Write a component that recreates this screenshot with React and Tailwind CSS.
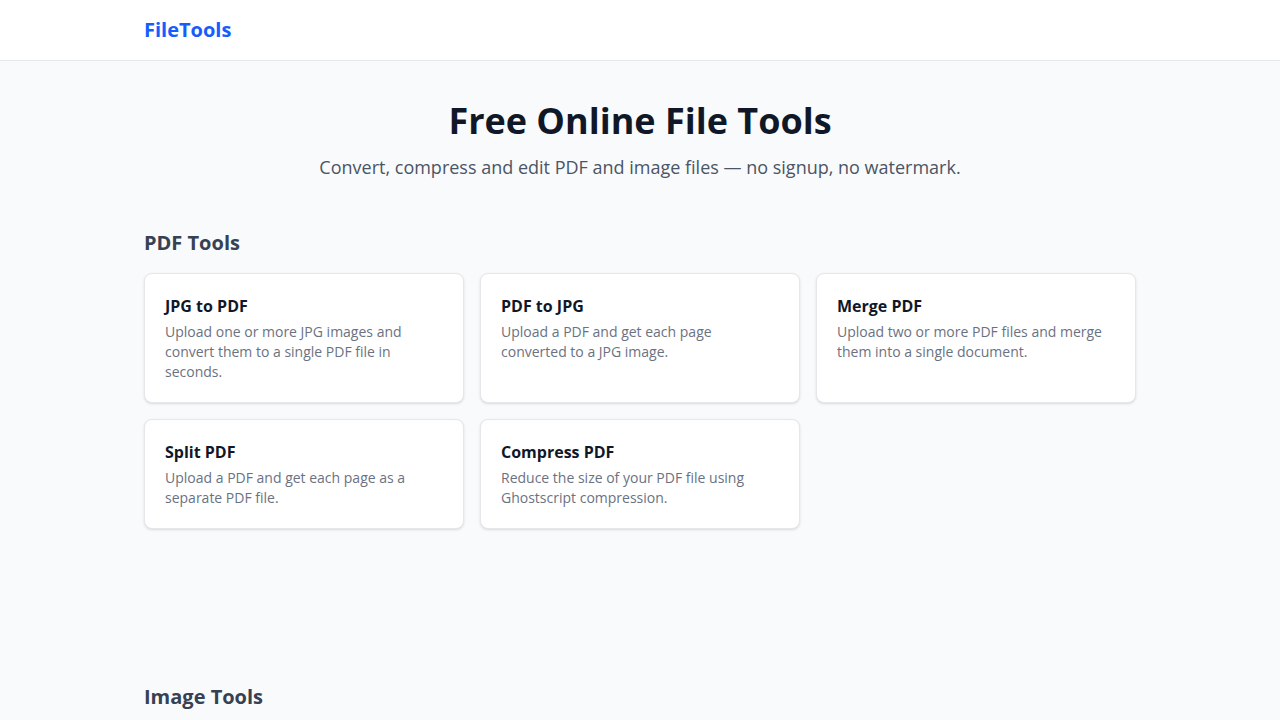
const pdfTools = [
  { title: "JPG to PDF", desc: "Upload one or more JPG images and convert them to a single PDF file in seconds." },
  { title: "PDF to JPG", desc: "Upload a PDF and get each page converted to a JPG image." },
  { title: "Merge PDF", desc: "Upload two or more PDF files and merge them into a single document." },
  { title: "Split PDF", desc: "Upload a PDF and get each page as a separate PDF file." },
  { title: "Compress PDF", desc: "Reduce the size of your PDF file using Ghostscript compression." },
]

const ToolCard = ({ title, desc }) => {
  return (
    <a href="#" className="block bg-white border border-gray-200 rounded-lg shadow-sm p-5 hover:shadow-md">
      <h3 className="text-base font-bold text-gray-900">{title}</h3>
      <p className="mt-1 text-sm text-gray-500">{desc}</p>
    </a>
  )
}

const App = () => {
  return (
    <div className="min-h-screen bg-gray-50" style={{ fontFamily: '"Open Sans", sans-serif' }}>
      {/* Header */}
      <header className="bg-white border-b border-gray-200">
        <div className="max-w-5xl mx-auto px-4 py-4">
          <span className="text-xl font-bold text-blue-600">FileTools</span>
        </div>
      </header>

      <main className="max-w-5xl mx-auto px-4 pt-10">
        {/* Hero */}
        <div className="text-center">
          <h1 className="text-4xl font-bold text-gray-900">Free Online File Tools</h1>
          <p className="mt-3 text-lg text-gray-600">Convert, compress and edit PDF and image files — no signup, no watermark.</p>
        </div>

        {/* PDF tools */}
        <section className="mt-12 mb-[154px]">
          <h2 className="text-xl font-bold text-gray-700 mb-4">PDF Tools</h2>
          <div className="grid grid-cols-3 gap-4">
            {pdfTools.map(tool => <ToolCard key={tool.title} {...tool} />)}
          </div>
        </section>

        {/* Image tools */}
        <section>
          <h2 className="text-xl font-bold text-gray-700">Image Tools</h2>
        </section>
      </main>
    </div>
  )
}

export default App
